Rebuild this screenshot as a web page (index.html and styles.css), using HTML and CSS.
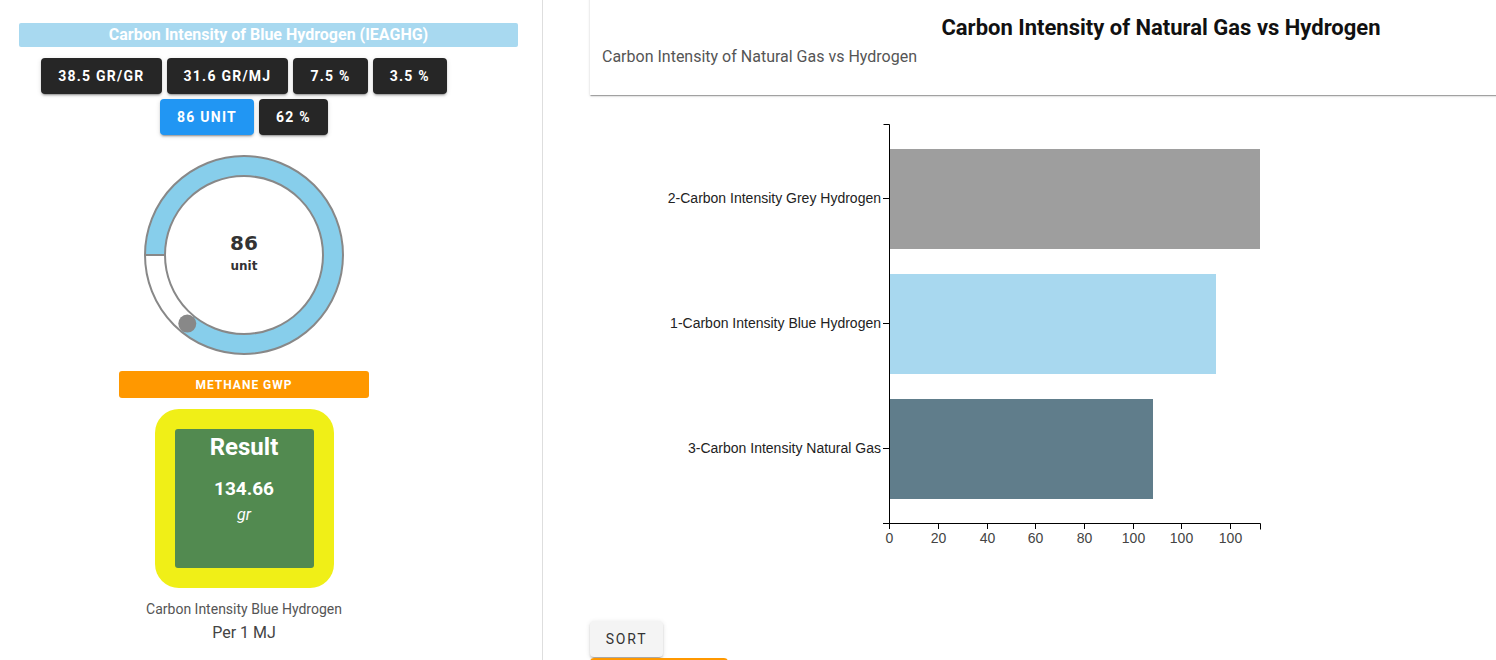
FILE: index.html
```html
<!DOCTYPE html>
<html>
<head>
<meta charset="utf-8">
<link rel="stylesheet" href="styles.css">
</head>
<body>
<div class="page">
  <aside class="left">
    <div class="title-bar">Carbon Intensity of Blue Hydrogen (IEAGHG)</div>
    <div class="col">
      <div class="chips">
        <button class="btn dark">38.5 gr/gr</button>
        <button class="btn dark">31.6 gr/MJ</button>
        <button class="btn dark">7.5 %</button>
        <button class="btn dark">3.5 %</button>
        <button class="btn blue">86 unit</button>
        <button class="btn dark">62 %</button>
      </div>
      <svg class="gauge" width="204" height="204" viewBox="0 0 204 204">
        <circle cx="102" cy="102" r="89" fill="none" stroke="#ffffff" stroke-width="20"/>
        <path d="M 13 102 A 89 89 0 1 1 45.3 170.6" fill="none" stroke="#87ceeb" stroke-width="20"/>
        <circle cx="102" cy="102" r="99" fill="none" stroke="#888888" stroke-width="2"/>
        <circle cx="102" cy="102" r="79" fill="none" stroke="#888888" stroke-width="2"/>
        <line x1="3" y1="102" x2="23" y2="102" stroke="#888888" stroke-width="2"/>
        <circle cx="45.3" cy="170.6" r="9" fill="#888888"/>
        <text x="102" y="97" text-anchor="middle" class="g-val">86</text>
        <text x="102" y="117" text-anchor="middle" class="g-unit">unit</text>
      </svg>
      <button class="btn orange">Methane GWP</button>
      <div class="result">
        <div class="result-inner">
          <div class="r-title">Result</div>
          <div class="r-val">134.66</div>
          <div class="r-unit">gr</div>
        </div>
      </div>
      <div class="cap1">Carbon Intensity Blue Hydrogen</div>
      <div class="cap2">Per 1 MJ</div>
    </div>
  </aside>
  <main class="right">
    <section class="card">
      <h2 class="card-title">Carbon Intensity of Natural Gas vs Hydrogen</h2>
      <p class="card-sub">Carbon Intensity of Natural Gas vs Hydrogen</p>
    </section>
    <svg class="chart" width="906" height="510" viewBox="0 0 906 510">
      <rect x="300" y="54" width="370" height="100" fill="#9e9e9e"/>
      <rect x="300" y="179" width="326" height="100" fill="#a8d8ef"/>
      <rect x="300" y="304" width="263" height="100" fill="#607d8b"/>
      <g stroke="#000" stroke-width="1" fill="none">
        <path d="M293.5 29.5 H299.5 V428.5"/>
        <line x1="293" y1="103.5" x2="299" y2="103.5"/>
        <line x1="293" y1="228.5" x2="299" y2="228.5"/>
        <line x1="293" y1="353.5" x2="299" y2="353.5"/>
        <path d="M293 428.5 H670.5 V434.5"/>
        <line x1="299.5" y1="428" x2="299.5" y2="434"/>
        <line x1="348.5" y1="428" x2="348.5" y2="434"/>
        <line x1="397.5" y1="428" x2="397.5" y2="434"/>
        <line x1="445.5" y1="428" x2="445.5" y2="434"/>
        <line x1="494.5" y1="428" x2="494.5" y2="434"/>
        <line x1="543.5" y1="428" x2="543.5" y2="434"/>
        <line x1="591.5" y1="428" x2="591.5" y2="434"/>
        <line x1="640.5" y1="428" x2="640.5" y2="434"/>
      </g>
      <g class="ylab" text-anchor="end">
        <text x="291" y="108">2-Carbon Intensity Grey Hydrogen</text>
        <text x="291" y="233">1-Carbon Intensity Blue Hydrogen</text>
        <text x="291" y="358">3-Carbon Intensity Natural Gas</text>
      </g>
      <g class="xlab" text-anchor="middle">
        <text x="299.5" y="448">0</text>
        <text x="348.5" y="448">20</text>
        <text x="397.5" y="448">40</text>
        <text x="445.5" y="448">60</text>
        <text x="494.5" y="448">80</text>
        <text x="543.5" y="448">100</text>
        <text x="591.5" y="448">100</text>
        <text x="640.5" y="448">100</text>
      </g>
    </svg>
    <button class="sort">Sort</button>
    <div class="orange-bar"></div>
  </main>
</div>
</body>
</html>
```

FILE: styles.css
```css
* { box-sizing: border-box; }
html, body { margin: 0; padding: 0; overflow: hidden; background: #fff; }
body { font-family: Roboto, "Liberation Sans", sans-serif; width: 1496px; height: 660px; }

.page { display: flex; align-items: flex-start; height: 660px; }

.left {
  width: 543px;
  flex: none;
  height: 660px;
  border-right: 1px solid #dedede;
}
.title-bar {
  margin: 23px 24px 0 19px;
  height: 24px;
  line-height: 24px;
  background: #a8d9f0;
  border-radius: 2px;
  color: #fff;
  font-weight: 700;
  font-size: 16px;
  text-align: center;
}
.col {
  width: 488px;
  display: flex;
  flex-direction: column;
  align-items: center;
}
.chips {
  margin-top: 11px;
  display: flex;
  flex-wrap: wrap;
  justify-content: center;
  gap: 5px;
}
.btn {
  border: 0;
  font-family: Roboto, sans-serif;
  font-weight: 700;
  font-size: 14px;
  letter-spacing: 1.25px;
  text-transform: uppercase;
  color: #fff;
  height: 36px;
  padding: 0 17px;
  border-radius: 4px;
  box-shadow: 0 3px 1px -2px rgba(0,0,0,.2), 0 2px 2px 0 rgba(0,0,0,.14), 0 1px 5px 0 rgba(0,0,0,.12);
}
.dark { background: #262626; }
.blue { background: #2196f3; }

.gauge { margin-top: 18px; display: block; }
.g-val { font-family: "DejaVu Sans", sans-serif; font-weight: 700; font-size: 20px; fill: #333; }
.g-unit { font-family: "DejaVu Sans", sans-serif; font-weight: 700; font-size: 12px; fill: #333; }

.orange {
  margin-top: 14px;
  width: 250px;
  height: 27px;
  background: #ff9800;
  font-size: 12px;
  letter-spacing: 1px;
  border-radius: 3px;
  box-shadow: none;
}
.result {
  margin-top: 11px;
  width: 179px;
  height: 179px;
  padding: 20px;
  background: #f0ef17;
  border-radius: 24px;
}
.result-inner {
  height: 100%;
  background: #528a50;
  border-radius: 3px;
  color: #fff;
  text-align: center;
  padding-top: 4px;
}
.r-title { font-size: 24px; font-weight: 700; line-height: 28px; }
.r-val { font-size: 19px; font-weight: 700; line-height: 22px; margin-top: 17px; }
.r-unit { font-size: 16px; font-style: italic; line-height: 20px; margin-top: 5px; }

.cap1 { margin-top: 12px; font-size: 14px; color: #555; line-height: 18px; }
.cap2 { margin-top: 6px; font-size: 16px; color: #444; line-height: 18px; }

.right { flex: none; padding-left: 47px; }
.card {
  width: 1142px;
  height: 99px;
  margin-top: -4px;
  padding: 18px 12px 0 12px;
  background: #fff;
  box-shadow: 0 2px 1px -1px rgba(0,0,0,.2), 0 1px 1px 0 rgba(0,0,0,.14), 0 1px 3px 0 rgba(0,0,0,.12);
}
.card-title {
  margin: 0;
  font-size: 22px;
  font-weight: 700;
  line-height: 28px;
  text-align: center;
  color: #111;
}
.card-sub {
  margin: 5px 0 0 0;
  font-size: 16px;
  line-height: 20px;
  color: #555;
}
.chart { display: block; }
.ylab text { font-family: "Liberation Sans", Arial, sans-serif; font-size: 14px; fill: #222; }
.xlab text { font-family: "Liberation Sans", Arial, sans-serif; font-size: 14px; fill: #444; }

.sort {
  margin-top: 16px;
  width: 73px;
  height: 36px;
  border: 0;
  border-radius: 4px;
  background: #f4f4f4;
  color: #333;
  font-family: Roboto, sans-serif;
  font-weight: 400;
  font-size: 14px;
  letter-spacing: 1.8px;
  text-transform: uppercase;
  display: block;
  box-shadow: 0 3px 1px -2px rgba(0,0,0,.2), 0 2px 2px 0 rgba(0,0,0,.14), 0 1px 5px 0 rgba(0,0,0,.12);
}
.orange-bar {
  margin-top: 1px;
  width: 138px;
  height: 36px;
  background: #ff9800;
  border-radius: 4px;
}
```
